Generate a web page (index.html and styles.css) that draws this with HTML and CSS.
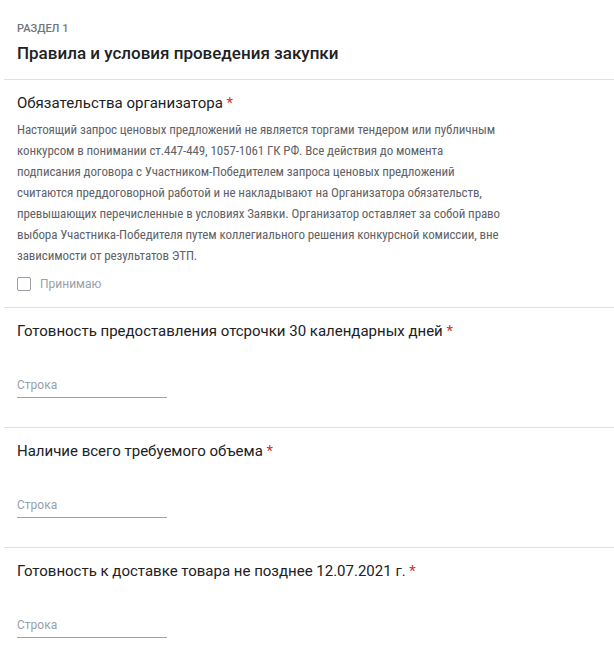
FILE: index.html
```html
<!DOCTYPE html>
<html lang="ru">
<head>
<meta charset="utf-8">
<link rel="stylesheet" href="styles.css">
</head>
<body>
<div class="form">
  <div class="section-head">
    <div class="section-label">Раздел 1</div>
    <div class="section-title">Правила и условия проведения закупки</div>
  </div>
  <div class="item">
    <div class="q-title">Обязательства организатора <span class="req">*</span></div>
    <div class="q-desc">Настоящий запрос ценовых предложений не является торгами тендером или публичным конкурсом в понимании ст.447-449, 1057-1061 ГК РФ. Все действия до момента подписания договора с Участником-Победителем запроса ценовых предложений считаются преддоговорной работой и не накладывают на Организатора обязательств, превышающих перечисленные в условиях Заявки. Организатор оставляет за собой право выбора Участника-Победителя путем коллегиального решения конкурсной комиссии, вне зависимости от результатов ЭТП.</div>
    <label class="check"><span class="box"></span><span class="check-text">Принимаю</span></label>
  </div>
  <div class="item">
    <div class="q-title">Готовность предоставления отсрочки 30 календарных дней <span class="req">*</span></div>
    <div class="field"><span class="placeholder">Строка</span></div>
  </div>
  <div class="item">
    <div class="q-title">Наличие всего требуемого объема <span class="req">*</span></div>
    <div class="field"><span class="placeholder">Строка</span></div>
  </div>
  <div class="item">
    <div class="q-title">Готовность к доставке товара не позднее 12.07.2021 г. <span class="req">*</span></div>
    <div class="field"><span class="placeholder">Строка</span></div>
  </div>
</div>
</body>
</html>
```
FILE: styles.css
```css
html, body {
  margin: 0;
  padding: 0;
  background: #fff;
}
body {
  font-family: Roboto, "Liberation Sans", Arial, sans-serif;
  color: #202124;
}
.form {
  margin-left: 4px;
}
.section-head {
  padding: 21px 13px 14px;
}
.section-label {
  font-size: 11px;
  line-height: 16px;
  font-weight: 500;
  text-transform: uppercase;
  color: #70757a;
}
.section-title {
  margin-top: 4px;
  font-size: 17px;
  line-height: 24px;
  font-weight: 500;
  color: #202124;
}
.item {
  border-top: 1px solid #e0e0e0;
  padding: 12px 13px 29px;
}
.q-title {
  font-size: 15px;
  line-height: 22px;
  color: #202124;
}
.req {
  color: #d93025;
}
.q-desc {
  margin-top: 5px;
  font-family: "Roboto Condensed", "Liberation Sans Narrow", Roboto, sans-serif;
  font-size: 13px;
  letter-spacing: -0.1px;
  line-height: 21px;
  color: #5f6368;
  max-width: 486px;
}
.check {
  margin-top: 10px;
  display: flex;
  align-items: center;
  gap: 9px;
  margin-bottom: -14px;
}
.box {
  box-sizing: border-box;
  width: 14px;
  height: 14px;
  border: 1px solid #9aa0a6;
  border-radius: 2px;
}
.check-text {
  font-size: 12px;
  line-height: 16px;
  color: #9aa0a6;
}
.field {
  margin-top: 35px;
  width: 150px;
  border-bottom: 1px solid #9aa0a6;
  padding-bottom: 4px;
}
.placeholder {
  display: block;
  font-size: 12px;
  line-height: 16px;
  color: #9aa0a6;
}
```
